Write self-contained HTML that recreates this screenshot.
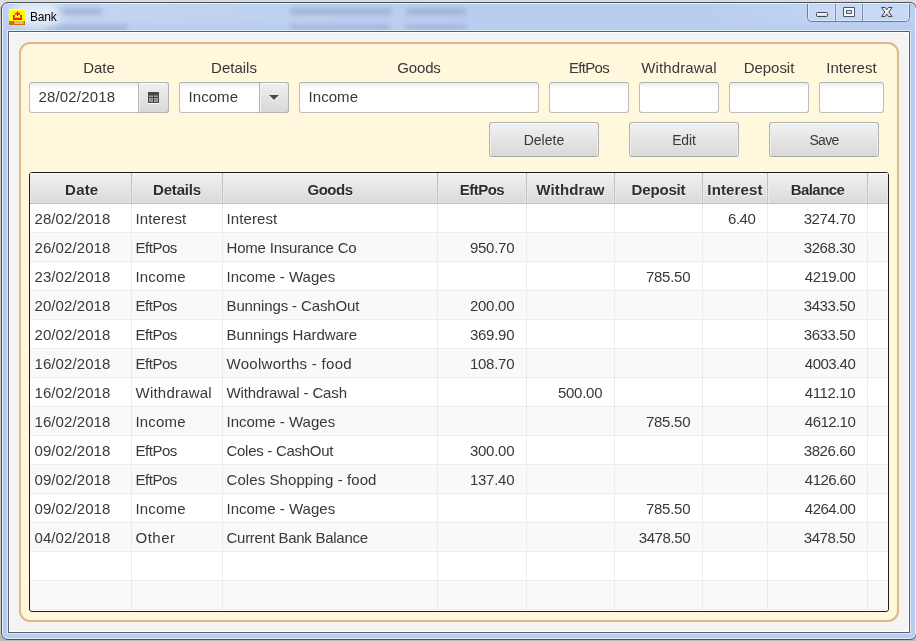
<!DOCTYPE html><html><head><meta charset="utf-8"><title>Bank</title><style>
*{box-sizing:border-box;margin:0;padding:0}
html,body{width:916px;height:641px;overflow:hidden}
body{background:#cbcac8;font-family:"Liberation Sans",sans-serif;font-size:15px;color:#383838;position:relative}
.abs{position:absolute}
span{opacity:.999}
#outer-top{left:0;top:0;width:916px;height:6px;background:#dcdcdc}
#outer-bot{left:0;top:636px;width:916px;height:5px;background:#b9b9b9}
#win{left:1px;top:2px;width:916px;height:638px;border-radius:7px;background:#b7cdf0;border:1px solid #48525f;box-shadow:inset 0 0 0 1px #e6effb}
#tb{left:3px;top:4px;width:912px;height:26px;overflow:hidden;border-radius:5px 5px 0 0;background:linear-gradient(180deg,rgba(183,205,240,0) 55%,rgba(183,205,240,.85) 100%),linear-gradient(90deg,#bcd1f1 0,#c3d6f2 14px,#bfd3f1 200px,#b9cdee 460px,#b9cdee 700px,#bed3f2 800px,#bbd1f1 912px)}
.blur{position:absolute;background:#8fa3c8;filter:blur(2.5px);border-radius:3px;opacity:.6}
#glow{left:10px;top:0px;width:48px;height:22px;background:#e9f1fb;filter:blur(5px);opacity:.9;border-radius:10px}
#title{left:30px;top:9px;font-size:12px;line-height:16px;color:#000;letter-spacing:-0.2px}
#client{left:8px;top:31px;width:902px;height:602px;background:#f4f4f4;border:1px solid #566274;box-shadow:0 0 0 1px #dde8f8,inset 0 0 0 1px #fff}
#panel{left:19px;top:42px;width:880px;height:580px;background:#fff8dc;border:2px solid #deb887;border-radius:11px}
.lbl{position:absolute;top:58px;height:20px;line-height:20px;text-align:center;white-space:nowrap;font-size:15px;color:#383838}
.tf{position:absolute;top:82px;height:31px;background:linear-gradient(#ececec 0,#fff 5px);border:1px solid #bdbdbd;border-top-color:#b0b0b0;border-radius:3px;line-height:28px;padding-left:8.500px;white-space:nowrap;color:#383838}
.btn{position:absolute;top:122px;height:35px;width:110px;border:1px solid #b4b4b4;border-bottom-color:#a6a6a6;border-radius:3px;background:linear-gradient(#f1f1f1,#d9d9d9);box-shadow:inset 0 1px 0 #fafafa,inset 1px 0 0 #ededed,inset -1px 0 0 #ededed;text-align:center;line-height:35px;color:#383838;font-size:14px}
#tbl{left:29px;top:172px;width:860px;height:440px;border:1px solid #1c1c1c;border-radius:3px;background:#fff;overflow:hidden}
.hd{position:absolute;top:0;height:31px;background:linear-gradient(#f1f1f1,#dadada);border-right:1px solid #c2c2c2;border-bottom:1px solid #bebebe;box-shadow:inset 1px 0 0 #ebebeb,inset -1px 0 0 #e9e9e9,inset 0 1px 0 #fbfbfb,inset 0 -1px 0 #e3e3e3;text-align:center;font-weight:bold;line-height:34.400px;white-space:nowrap;color:#2e2e2e;text-shadow:0 1px 0 rgba(255,255,255,.7)}
.row{position:absolute;left:0;width:858px;height:29px;border-bottom:1px solid #ececec}
.row.odd{background:#f9f9f9}
.c{position:absolute;top:0;height:28px;line-height:29px;border-right:1px solid #ececec;white-space:nowrap;overflow:hidden;padding:0 11.800px 0 3.500px}
.c.r{text-align:right}
</style></head><body>
<div class="abs" id="outer-top"></div><div class="abs" id="outer-bot"></div>
<div class="abs" id="win"></div>
<div class="abs" id="tb">
<div class="blur" style="left:53px;top:4px;width:46px;height:7px"></div>
<div class="blur" style="left:43px;top:21px;width:82px;height:6px"></div>
<div class="blur" style="left:287px;top:4px;width:102px;height:7px"></div>
<div class="blur" style="left:403px;top:4px;width:60px;height:7px"></div>
<div class="blur" style="left:287px;top:21px;width:100px;height:5px"></div>
<div class="blur" style="left:403px;top:21px;width:60px;height:5px"></div>
<div class="abs" id="glow"></div>
</div>
<svg class="abs" style="left:9px;top:9px" width="16" height="16" viewBox="0 0 16 16">
<rect width="16" height="16" fill="#ffff00"/><rect width="16" height="1" fill="#fffb9a"/>
<rect y="12" width="16" height="4" fill="#d96a10"/>
<path d="M4 6h2v2h5V6h2v5H4z" fill="#e12a0c"/><rect x="5" y="8" width="7" height="1" fill="#ffb400"/>
<path d="M5.5 3l1.2 1 1.8-2 1.8 2 1.2-1-.6 3H6.100z" fill="#ee5a10"/><rect x="8" y="4" width="1" height="3" fill="#d81808"/>
<text x="5.500" y="15.300" font-family="Liberation Sans,sans-serif" font-size="3.800" font-weight="bold" fill="#ffe9c8" textLength="9.500" lengthAdjust="spacingAndGlyphs">BANK</text>
</svg>
<div class="abs" id="title"><span>Bank</span></div>
<svg class="abs" style="left:805px;top:2px" width="107" height="22" viewBox="0 0 107 22">
<defs><linearGradient id="cg" x1="0" y1="0" x2="0" y2="1"><stop offset="0" stop-color="#c5d8f3"/><stop offset=".5" stop-color="#c9dbf4"/><stop offset="1" stop-color="#c2d5f1"/></linearGradient><linearGradient id="gg" x1="0" y1="0" x2="0" y2="1"><stop offset="0" stop-color="#ffffff"/><stop offset="1" stop-color="#d4d4d4"/></linearGradient></defs>
<path d="M2.500 2V15.500a4 4 0 0 0 4 4H100.500a4 4 0 0 0 4-4V2" fill="url(#cg)" stroke="#6c7b94" stroke-width="1"/>
<path d="M3.500 2V15.500a3 3 0 0 0 3 3H100.500a3 3 0 0 0 3-3V2" fill="none" stroke="#e3edfa" stroke-width="1" opacity=".8"/>
<path d="M30.500 2V19M57.500 2V19" stroke="#7a89a3"/><path d="M31.500 2V18M58.500 2V18M29.500 2V18M56.500 2V18" stroke="#dfe9f8" opacity=".7"/>
<rect x="11.500" y="10.500" width="11" height="4" rx="1" fill="url(#gg)" stroke="#3e4656"/>
<path d="M38.500 5.500h11v9h-11zM41.500 8.500v3h5v-3z" fill="#fafafa" fill-rule="evenodd" stroke="#4b5568" stroke-linejoin="round"/>
<path d="M76.500 5.500h3.700l1.600 2.300 1.600-2.300h3.700l-3.300 4.500 3.300 4.500h-3.700l-1.600-2.300-1.600 2.300h-3.700l3.300-4.500z" fill="url(#gg)" stroke="#3e4656" stroke-linejoin="round"/>
</svg>
<div class="abs" id="client"></div>
<div class="abs" id="panel"></div>
<div class="lbl" style="left:9px;width:180px"><span class="l" style="letter-spacing:-0.100px">Date</span></div>
<div class="tf" style="left:29px;width:140px"><span class="f" style="letter-spacing:0.167px">28/02/2018</span></div>
<div class="lbl" style="left:159px;width:150px"><span class="l" style="letter-spacing:0.000px">Details</span></div>
<div class="tf" style="left:179px;width:110px"><span class="f" style="letter-spacing:0.060px">Income</span></div>
<div class="lbl" style="left:279px;width:280px"><span class="l" style="letter-spacing:-0.175px">Goods</span></div>
<div class="tf" style="left:299px;width:240px"><span class="f" style="letter-spacing:0.060px">Income</span></div>
<div class="lbl" style="left:529px;width:120px"><span class="l" style="letter-spacing:-0.660px">EftPos</span></div>
<div class="tf" style="left:549px;width:80px"></div>
<div class="lbl" style="left:619px;width:120px"><span class="l" style="letter-spacing:0.133px">Withdrawal</span></div>
<div class="tf" style="left:639px;width:80px"></div>
<div class="lbl" style="left:709px;width:120px"><span class="l" style="letter-spacing:-0.033px">Deposit</span></div>
<div class="tf" style="left:729px;width:80px"></div>
<div class="lbl" style="left:799px;width:105px"><span class="l" style="letter-spacing:0.057px">Interest</span></div>
<div class="tf" style="left:819px;width:65px"></div>
<div class="abs" style="left:138px;top:82px;width:31px;height:31px;border:1px solid #b4b4b4;border-radius:0 3px 3px 0;background:linear-gradient(#f0f0f0,#d8d8d8);box-shadow:inset 0 1px 0 #fafafa,inset 1px 0 0 #f0f0f0"></div>
<svg class="abs" style="left:148px;top:92px" width="11" height="12" viewBox="0 0 11 12"><rect y="11" width="11" height="1" fill="#fff"/><rect width="11" height="11" fill="#474747"/>
<g fill="#a9a9a9"><rect x="1" y="3.500" width="4" height="1.500"/><rect x="6" y="3.500" width="4" height="1.500"/><rect x="1" y="6" width="4" height="4"/><rect x="6" y="6" width="4" height="4"/></g>
<g fill="#474747" opacity=".45"><rect x="2.700" y="3" width=".8" height="7.500"/><rect x="7.700" y="3" width=".8" height="7.500"/><rect x="1" y="7.700" width="9" height=".8"/></g></svg>
<div class="abs" style="left:259px;top:82px;width:30px;height:31px;border:1px solid #b4b4b4;border-radius:0 3px 3px 0;background:linear-gradient(#f0f0f0,#d8d8d8);box-shadow:inset 0 1px 0 #fafafa,inset 1px 0 0 #f0f0f0"></div>
<svg class="abs" style="left:269px;top:95px" width="10" height="7" viewBox="0 0 10 7"><path d="M0 1h10l-5 5z" fill="#fff"/><path d="M0 0h10l-5 5z" fill="#4a4a4a"/></svg>
<div class="btn" style="left:489px"><span class="b" style="letter-spacing:0.040px">Delete</span></div>
<div class="btn" style="left:629px"><span class="b" style="letter-spacing:-0.100px">Edit</span></div>
<div class="btn" style="left:769px"><span class="b" style="letter-spacing:-0.667px">Save</span></div>
<div class="abs" id="tbl">
<div class="hd" style="left:0px;width:102px;padding-left:2.500px"><span class="h" style="letter-spacing:0.200px">Date</span></div>
<div class="hd" style="left:102px;width:91px"><span class="h" style="letter-spacing:-0.167px">Details</span></div>
<div class="hd" style="left:193px;width:215px"><span class="h" style="letter-spacing:-0.500px">Goods</span></div>
<div class="hd" style="left:408px;width:89px"><span class="h" style="letter-spacing:-0.520px">EftPos</span></div>
<div class="hd" style="left:497px;width:88px"><span class="h" style="letter-spacing:0.114px">Withdraw</span></div>
<div class="hd" style="left:585px;width:88px"><span class="h" style="letter-spacing:-0.167px">Deposit</span></div>
<div class="hd" style="left:673px;width:65px"><span class="h" style="letter-spacing:0.143px">Interest</span></div>
<div class="hd" style="left:738px;width:100px"><span class="h" style="letter-spacing:-0.550px">Balance</span></div>
<div class="hd" style="left:838px;width:20px;border-right:0"></div>
<div class="row" style="top:31px">
<div class="c" style="left:0px;width:102px;padding-left:4.500px"><span class="t" style="letter-spacing:0.089px">28/02/2018</span></div>
<div class="c" style="left:102px;width:91px"><span class="t" style="letter-spacing:0.100px">Interest</span></div>
<div class="c" style="left:193px;width:215px"><span class="t" style="letter-spacing:0.100px">Interest</span></div>
<div class="c r" style="left:408px;width:89px"></div>
<div class="c r" style="left:497px;width:88px"></div>
<div class="c r" style="left:585px;width:88px"></div>
<div class="c r" style="left:673px;width:65px"><span class="r" style="letter-spacing:-0.527px">6.40</span></div>
<div class="c r" style="left:738px;width:100px"><span class="r" style="letter-spacing:-0.383px">3274.70</span></div>
<div class="c" style="left:838px;width:20px;border-right:0"></div>
</div>
<div class="row odd" style="top:60px">
<div class="c" style="left:0px;width:102px;padding-left:4.500px"><span class="t" style="letter-spacing:0.089px">26/02/2018</span></div>
<div class="c" style="left:102px;width:91px"><span class="t" style="letter-spacing:-0.480px">EftPos</span></div>
<div class="c" style="left:193px;width:215px"><span class="t" style="letter-spacing:-0.200px">Home Insurance Co</span></div>
<div class="c r" style="left:408px;width:89px"><span class="r" style="letter-spacing:-0.280px">950.70</span></div>
<div class="c r" style="left:497px;width:88px"></div>
<div class="c r" style="left:585px;width:88px"></div>
<div class="c r" style="left:673px;width:65px"></div>
<div class="c r" style="left:738px;width:100px"><span class="r" style="letter-spacing:-0.385px">3268.30</span></div>
<div class="c" style="left:838px;width:20px;border-right:0"></div>
</div>
<div class="row" style="top:89px">
<div class="c" style="left:0px;width:102px;padding-left:4.500px"><span class="t" style="letter-spacing:0.089px">23/02/2018</span></div>
<div class="c" style="left:102px;width:91px"><span class="t" style="letter-spacing:0.180px">Income</span></div>
<div class="c" style="left:193px;width:215px"><span class="t" style="letter-spacing:0.000px">Income - Wages</span></div>
<div class="c r" style="left:408px;width:89px"></div>
<div class="c r" style="left:497px;width:88px"></div>
<div class="c r" style="left:585px;width:88px"><span class="r" style="letter-spacing:-0.280px">785.50</span></div>
<div class="c r" style="left:673px;width:65px"></div>
<div class="c r" style="left:738px;width:100px"><span class="r" style="letter-spacing:-0.552px">4219.00</span></div>
<div class="c" style="left:838px;width:20px;border-right:0"></div>
</div>
<div class="row odd" style="top:118px">
<div class="c" style="left:0px;width:102px;padding-left:4.500px"><span class="t" style="letter-spacing:0.089px">20/02/2018</span></div>
<div class="c" style="left:102px;width:91px"><span class="t" style="letter-spacing:-0.480px">EftPos</span></div>
<div class="c" style="left:193px;width:215px"><span class="t" style="letter-spacing:-0.124px">Bunnings - CashOut</span></div>
<div class="c r" style="left:408px;width:89px"><span class="r" style="letter-spacing:-0.280px">200.00</span></div>
<div class="c r" style="left:497px;width:88px"></div>
<div class="c r" style="left:585px;width:88px"></div>
<div class="c r" style="left:673px;width:65px"></div>
<div class="c r" style="left:738px;width:100px"><span class="r" style="letter-spacing:-0.385px">3433.50</span></div>
<div class="c" style="left:838px;width:20px;border-right:0"></div>
</div>
<div class="row" style="top:147px">
<div class="c" style="left:0px;width:102px;padding-left:4.500px"><span class="t" style="letter-spacing:0.089px">20/02/2018</span></div>
<div class="c" style="left:102px;width:91px"><span class="t" style="letter-spacing:-0.480px">EftPos</span></div>
<div class="c" style="left:193px;width:215px"><span class="t" style="letter-spacing:-0.075px">Bunnings Hardware</span></div>
<div class="c r" style="left:408px;width:89px"><span class="r" style="letter-spacing:-0.280px">369.90</span></div>
<div class="c r" style="left:497px;width:88px"></div>
<div class="c r" style="left:585px;width:88px"></div>
<div class="c r" style="left:673px;width:65px"></div>
<div class="c r" style="left:738px;width:100px"><span class="r" style="letter-spacing:-0.385px">3633.50</span></div>
<div class="c" style="left:838px;width:20px;border-right:0"></div>
</div>
<div class="row odd" style="top:176px">
<div class="c" style="left:0px;width:102px;padding-left:4.500px"><span class="t" style="letter-spacing:0.089px">16/02/2018</span></div>
<div class="c" style="left:102px;width:91px"><span class="t" style="letter-spacing:-0.480px">EftPos</span></div>
<div class="c" style="left:193px;width:215px"><span class="t" style="letter-spacing:0.281px">Woolworths - food</span></div>
<div class="c r" style="left:408px;width:89px"><span class="r" style="letter-spacing:-0.280px">108.70</span></div>
<div class="c r" style="left:497px;width:88px"></div>
<div class="c r" style="left:585px;width:88px"></div>
<div class="c r" style="left:673px;width:65px"></div>
<div class="c r" style="left:738px;width:100px"><span class="r" style="letter-spacing:-0.552px">4003.40</span></div>
<div class="c" style="left:838px;width:20px;border-right:0"></div>
</div>
<div class="row" style="top:205px">
<div class="c" style="left:0px;width:102px;padding-left:4.500px"><span class="t" style="letter-spacing:0.089px">16/02/2018</span></div>
<div class="c" style="left:102px;width:91px"><span class="t" style="letter-spacing:0.222px">Withdrawal</span></div>
<div class="c" style="left:193px;width:215px"><span class="t" style="letter-spacing:-0.125px">Withdrawal - Cash</span></div>
<div class="c r" style="left:408px;width:89px"></div>
<div class="c r" style="left:497px;width:88px"><span class="r" style="letter-spacing:-0.280px">500.00</span></div>
<div class="c r" style="left:585px;width:88px"></div>
<div class="c r" style="left:673px;width:65px"></div>
<div class="c r" style="left:738px;width:100px"><span class="r" style="letter-spacing:-0.385px">4112.10</span></div>
<div class="c" style="left:838px;width:20px;border-right:0"></div>
</div>
<div class="row odd" style="top:234px">
<div class="c" style="left:0px;width:102px;padding-left:4.500px"><span class="t" style="letter-spacing:0.089px">16/02/2018</span></div>
<div class="c" style="left:102px;width:91px"><span class="t" style="letter-spacing:0.180px">Income</span></div>
<div class="c" style="left:193px;width:215px"><span class="t" style="letter-spacing:0.000px">Income - Wages</span></div>
<div class="c r" style="left:408px;width:89px"></div>
<div class="c r" style="left:497px;width:88px"></div>
<div class="c r" style="left:585px;width:88px"><span class="r" style="letter-spacing:-0.280px">785.50</span></div>
<div class="c r" style="left:673px;width:65px"></div>
<div class="c r" style="left:738px;width:100px"><span class="r" style="letter-spacing:-0.552px">4612.10</span></div>
<div class="c" style="left:838px;width:20px;border-right:0"></div>
</div>
<div class="row" style="top:263px">
<div class="c" style="left:0px;width:102px;padding-left:4.500px"><span class="t" style="letter-spacing:0.089px">09/02/2018</span></div>
<div class="c" style="left:102px;width:91px"><span class="t" style="letter-spacing:-0.480px">EftPos</span></div>
<div class="c" style="left:193px;width:215px"><span class="t" style="letter-spacing:-0.279px">Coles - CashOut</span></div>
<div class="c r" style="left:408px;width:89px"><span class="r" style="letter-spacing:-0.280px">300.00</span></div>
<div class="c r" style="left:497px;width:88px"></div>
<div class="c r" style="left:585px;width:88px"></div>
<div class="c r" style="left:673px;width:65px"></div>
<div class="c r" style="left:738px;width:100px"><span class="r" style="letter-spacing:-0.385px">3826.60</span></div>
<div class="c" style="left:838px;width:20px;border-right:0"></div>
</div>
<div class="row odd" style="top:292px">
<div class="c" style="left:0px;width:102px;padding-left:4.500px"><span class="t" style="letter-spacing:0.089px">09/02/2018</span></div>
<div class="c" style="left:102px;width:91px"><span class="t" style="letter-spacing:-0.480px">EftPos</span></div>
<div class="c" style="left:193px;width:215px"><span class="t" style="letter-spacing:0.075px">Coles Shopping - food</span></div>
<div class="c r" style="left:408px;width:89px"><span class="r" style="letter-spacing:-0.280px">137.40</span></div>
<div class="c r" style="left:497px;width:88px"></div>
<div class="c r" style="left:585px;width:88px"></div>
<div class="c r" style="left:673px;width:65px"></div>
<div class="c r" style="left:738px;width:100px"><span class="r" style="letter-spacing:-0.552px">4126.60</span></div>
<div class="c" style="left:838px;width:20px;border-right:0"></div>
</div>
<div class="row" style="top:321px">
<div class="c" style="left:0px;width:102px;padding-left:4.500px"><span class="t" style="letter-spacing:0.089px">09/02/2018</span></div>
<div class="c" style="left:102px;width:91px"><span class="t" style="letter-spacing:0.180px">Income</span></div>
<div class="c" style="left:193px;width:215px"><span class="t" style="letter-spacing:0.000px">Income - Wages</span></div>
<div class="c r" style="left:408px;width:89px"></div>
<div class="c r" style="left:497px;width:88px"></div>
<div class="c r" style="left:585px;width:88px"><span class="r" style="letter-spacing:-0.280px">785.50</span></div>
<div class="c r" style="left:673px;width:65px"></div>
<div class="c r" style="left:738px;width:100px"><span class="r" style="letter-spacing:-0.552px">4264.00</span></div>
<div class="c" style="left:838px;width:20px;border-right:0"></div>
</div>
<div class="row odd" style="top:350px">
<div class="c" style="left:0px;width:102px;padding-left:4.500px"><span class="t" style="letter-spacing:0.089px">04/02/2018</span></div>
<div class="c" style="left:102px;width:91px"><span class="t" style="letter-spacing:0.500px">Other</span></div>
<div class="c" style="left:193px;width:215px"><span class="t" style="letter-spacing:-0.274px">Current Bank Balance</span></div>
<div class="c r" style="left:408px;width:89px"></div>
<div class="c r" style="left:497px;width:88px"></div>
<div class="c r" style="left:585px;width:88px"><span class="r" style="letter-spacing:-0.385px">3478.50</span></div>
<div class="c r" style="left:673px;width:65px"></div>
<div class="c r" style="left:738px;width:100px"><span class="r" style="letter-spacing:-0.385px">3478.50</span></div>
<div class="c" style="left:838px;width:20px;border-right:0"></div>
</div>
<div class="row" style="top:379px">
<div class="c" style="left:0px;width:102px;padding-left:4.500px"></div>
<div class="c" style="left:102px;width:91px"></div>
<div class="c" style="left:193px;width:215px"></div>
<div class="c r" style="left:408px;width:89px"></div>
<div class="c r" style="left:497px;width:88px"></div>
<div class="c r" style="left:585px;width:88px"></div>
<div class="c r" style="left:673px;width:65px"></div>
<div class="c r" style="left:738px;width:100px"></div>
<div class="c" style="left:838px;width:20px;border-right:0"></div>
</div>
<div class="row odd" style="top:408px">
<div class="c" style="left:0px;width:102px;padding-left:4.500px"></div>
<div class="c" style="left:102px;width:91px"></div>
<div class="c" style="left:193px;width:215px"></div>
<div class="c r" style="left:408px;width:89px"></div>
<div class="c r" style="left:497px;width:88px"></div>
<div class="c r" style="left:585px;width:88px"></div>
<div class="c r" style="left:673px;width:65px"></div>
<div class="c r" style="left:738px;width:100px"></div>
<div class="c" style="left:838px;width:20px;border-right:0"></div>
</div>
</div>
</body></html>
